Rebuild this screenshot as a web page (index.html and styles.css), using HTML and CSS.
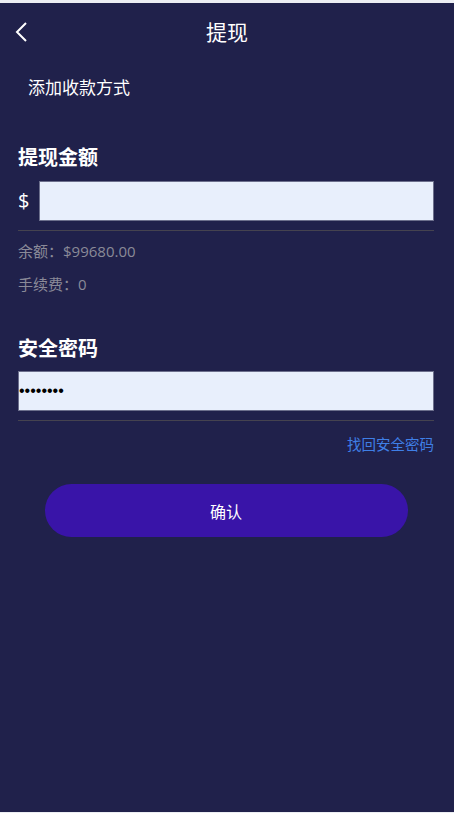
FILE: index.html
```html
<!DOCTYPE html>
<html lang="zh-CN">
<head>
  <meta charset="UTF-8">
  <meta name="viewport" content="width=device-width, initial-scale=1.0">
  <title>提现</title>
  <link rel="stylesheet" href="styles.css">
</head>
<body>
  <div class="app">
    <div class="header">
      <a class="back" href="#">
        <svg width="14" height="20" viewBox="0 0 14 20"><polyline points="11,1 2,10 11,19" fill="none" stroke="#fff" stroke-width="2"/></svg>
      </a>
      <h1>提现</h1>
    </div>

    <div class="add-method">添加收款方式</div>

    <div class="section">
      <h2 class="label first">提现金额</h2>
      <div class="field amount">
        <span class="currency">$</span>
        <input type="text" class="input">
      </div>
      <div class="info">
        <p>余额：$99680.00</p>
        <p>手续费：0</p>
      </div>

      <h2 class="label second">安全密码</h2>
      <div class="field">
        <input type="password" class="input pwd" value="12345678">
      </div>
      <div class="forgot"><a href="#">找回安全密码</a></div>

      <button class="confirm">确认</button>
    </div>
  </div>
</body>
</html>
```

FILE: styles.css
```css
body {
  margin: 0;
  background-color: #eceef3;
  font-family: "Open Sans", "Noto Sans CJK SC", sans-serif;
  color: #fff;
}
.app {
  margin-top: 3px;
  height: 809px;
  background-color: #20214b;
}
.header {
  height: 56px;
  display: flex;
  align-items: center;
  justify-content: center;
  position: relative;
}
.header h1 {
  margin: 0;
  font-size: 21px;
  font-weight: 400;
}
.back {
  position: absolute;
  left: 15px;
  top: 19px;
  display: flex;
}
.add-method {
  height: 58px;
  line-height: 58px;
  padding-left: 28px;
  font-size: 17px;
}
.section {
  padding: 0 20px 0 18px;
}
.label {
  margin: 0;
  font-size: 20px;
  font-weight: 700;
  line-height: 24px;
}
.label.first {
  margin-top: 29px;
  margin-bottom: 11px;
}
.label.second {
  margin-top: 36px;
  margin-bottom: 10px;
}
.field {
  display: flex;
  align-items: center;
  padding-bottom: 9px;
  border-bottom: 1px solid #45434f;
}
.currency {
  width: 21px;
  font-size: 20px;
  line-height: 40px;
}
.input {
  flex: 1;
  min-width: 0;
  height: 40px;
  box-sizing: border-box;
  margin: 0;
  padding: 0;
  border: 1px solid #6c6f8c;
  background-color: #e8effc;
  outline: none;
  font-size: 13px;
  color: #000;
}
.pwd {
  font-size: 16px;
}
.info {
  padding-top: 4px;
}
.info p {
  margin: 0;
  font-size: 15px;
  line-height: 33px;
  color: #8a8a98;
}
.forgot {
  margin-top: 14px;
  text-align: right;
  font-size: 14.5px;
  line-height: 20px;
}
.forgot a {
  color: #3f7fe6;
  text-decoration: none;
}
.confirm {
  display: block;
  width: 363px;
  height: 53px;
  margin: 29px auto 0;
  border: none;
  border-radius: 27px;
  background-color: #3914a8;
  color: #fff;
  font-family: inherit;
  font-size: 16px;
}
```
